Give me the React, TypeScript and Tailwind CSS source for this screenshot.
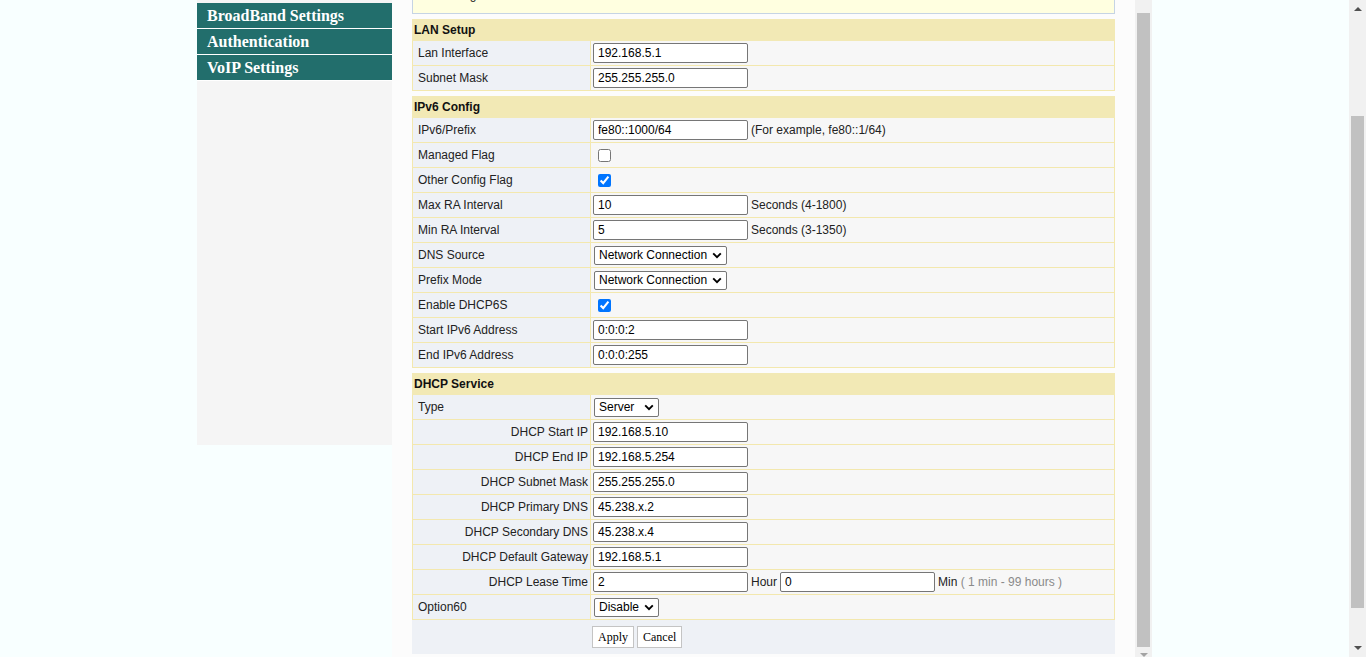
import React from "react";

const MENU = ["BroadBand Settings", "Authentication", "VoIP Settings"];

function Chevron() {
  return (
    <svg width="10" height="7" viewBox="0 0 10 7" className="shrink-0">
      <path d="M1.2 1.4 L5 5.2 L8.8 1.4" fill="none" stroke="#000" strokeWidth="1.9" />
    </svg>
  );
}

function Select({ value, className }: { value: string; className: string }) {
  return (
    <div
      className={`ml-[1px] flex h-[19px] items-center justify-between rounded-[2px] border border-[#767676] bg-white pl-[4px] pr-[4px] text-[12px] text-black ${className}`}
    >
      <span>{value}</span>
      <Chevron />
    </div>
  );
}

function Text({ value, className = "w-[155px]" }: { value: string; className?: string }) {
  return (
    <input
      defaultValue={value}
      className={`h-[20px] rounded-[2px] border border-[#767676] bg-white px-[4px] text-[12px] text-black outline-none ${className}`}
    />
  );
}

function Check({ on }: { on?: boolean }) {
  return <input type="checkbox" defaultChecked={on} className="ml-[5px] h-[13px] w-[13px]" />;
}

function Row({ label, right, children }: { label: string; right?: boolean; children?: React.ReactNode }) {
  return (
    <div className="flex h-[25px] border-b border-[#f3e8ae]">
      <div
        className={`flex w-[179px] shrink-0 items-center border-x border-[#f3e8ae] bg-[#eef1f6] pl-[5px] ${
          right ? "justify-end pr-[2px]" : ""
        }`}
      >
        {label}
      </div>
      <div className="flex flex-1 items-center border-r border-[#f3e8ae] bg-[#f7f7f7] pl-[2px]">{children}</div>
    </div>
  );
}

function Section({ title, children }: { title: string; children: React.ReactNode }) {
  return (
    <div className="mt-[5px]">
      <div className="flex h-[22px] items-center bg-[#f2e9b5] pl-[2px] font-bold text-[#111]">{title}</div>
      {children}
    </div>
  );
}

function Hint({ children }: { children: React.ReactNode }) {
  return <span className="ml-[3px] whitespace-pre text-[#222]">{children}</span>;
}

export default function App() {
  return (
    <div className="flex h-[657px] w-[1366px] overflow-hidden bg-[#f8ffff] font-['Liberation_Sans',Arial,sans-serif] text-[12px] text-[#222]">
      <div className="w-[197px] shrink-0" />

      <aside className="h-[445px] w-[195px] shrink-0 bg-[#f5f5f5] pt-[3px]">
        {MENU.map((m) => (
          <div
            key={m}
            className="flex h-[26px] items-center border-b border-white bg-[#226e6c] pl-[10px] font-['Liberation_Serif',serif] text-[16px] font-bold text-white"
          >
            {m}
          </div>
        ))}
      </aside>

      <main className="w-[743px] shrink-0 bg-[#fcfcfc] px-[20px]">
        {/* notice box, mostly scrolled out of view */}
        <div className="-mt-[30px] h-[44px] border border-[#c6d4e4] bg-[#ffffe0] pl-[8px] leading-[16px]">
          <div>Note: changes to the LAN address take effect after the device restarts, check</div>
          <div>the settings.</div>
        </div>

        <Section title="LAN Setup">
          <Row label="Lan Interface">
            <Text value="192.168.5.1" />
          </Row>
          <Row label="Subnet Mask">
            <Text value="255.255.255.0" />
          </Row>
        </Section>

        <Section title="IPv6 Config">
          <Row label="IPv6/Prefix">
            <Text value="fe80::1000/64" />
            <Hint>(For example, fe80::1/64)</Hint>
          </Row>
          <Row label="Managed Flag">
            <Check />
          </Row>
          <Row label="Other Config Flag">
            <Check on />
          </Row>
          <Row label="Max RA Interval">
            <Text value="10" />
            <Hint>Seconds (4-1800)</Hint>
          </Row>
          <Row label="Min RA Interval">
            <Text value="5" />
            <Hint>Seconds (3-1350)</Hint>
          </Row>
          <Row label="DNS Source">
            <Select value="Network Connection" className="w-[133px]" />
          </Row>
          <Row label="Prefix Mode">
            <Select value="Network Connection" className="w-[133px]" />
          </Row>
          <Row label="Enable DHCP6S">
            <Check on />
          </Row>
          <Row label="Start IPv6 Address">
            <Text value="0:0:0:2" />
          </Row>
          <Row label="End IPv6 Address">
            <Text value="0:0:0:255" />
          </Row>
        </Section>

        <Section title="DHCP Service">
          <Row label="Type">
            <Select value="Server" className="w-[65px]" />
          </Row>
          <Row label="DHCP Start IP" right>
            <Text value="192.168.5.10" />
          </Row>
          <Row label="DHCP End IP" right>
            <Text value="192.168.5.254" />
          </Row>
          <Row label="DHCP Subnet Mask" right>
            <Text value="255.255.255.0" />
          </Row>
          <Row label="DHCP Primary DNS" right>
            <Text value="45.238.x.2" />
          </Row>
          <Row label="DHCP Secondary DNS" right>
            <Text value="45.238.x.4" />
          </Row>
          <Row label="DHCP Default Gateway" right>
            <Text value="192.168.5.1" />
          </Row>
          <Row label="DHCP Lease Time" right>
            <Text value="2" />
            <span className="ml-[3px] mr-[3px]">Hour</span>
            <Text value="0" />
            <span className="ml-[3px]">Min</span>
            <span className="whitespace-pre text-[#8a8a8a]"> ( 1 min - 99 hours )</span>
          </Row>
          <Row label="Option60">
            <Select value="Disable" className="w-[65px]" />
          </Row>
          <div className="flex h-[34px] items-start gap-[3px] bg-[#eef1f6] pl-[180px] pt-[6px] font-['Liberation_Serif',serif] text-[12px] text-black">
            <button className="h-[22px] border border-[#c4c4c4] bg-white px-[5px]">Apply</button>
            <button className="h-[22px] border border-[#c4c4c4] bg-white px-[5px]">Cancel</button>
          </div>
        </Section>
      </main>

      {/* inner frame scrollbar */}
      <div className="flex w-[17px] shrink-0 flex-col items-center bg-[#f1f1f1]">
        <div className="mt-[13px] h-[636px] w-[13px] bg-[#c1c1c1]" />
        <div className="mt-[6px] h-0 w-0 border-x-[4px] border-t-[4px] border-x-transparent border-t-[#a3a3a3]" />
      </div>

      <div className="flex-1" />

      {/* page scrollbar */}
      <div className="flex w-[17px] shrink-0 flex-col items-center bg-[#f1f1f1]">
        <div className="mt-[7px] h-0 w-0 border-x-[4px] border-b-[4px] border-x-transparent border-b-[#505050]" />
        <div className="mt-[105px] h-[492px] w-[13px] bg-[#c1c1c1]" />
        <div className="mt-[38px] h-0 w-0 border-x-[4px] border-t-[4px] border-x-transparent border-t-[#505050]" />
      </div>
    </div>
  );
}
